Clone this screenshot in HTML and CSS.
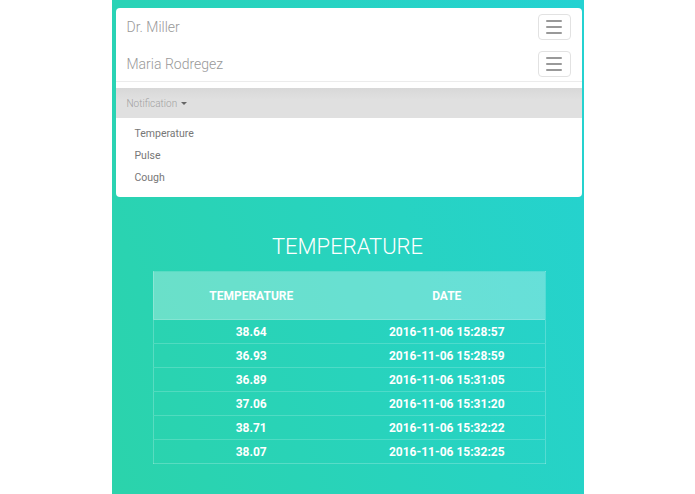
FILE: index.html
```html
<!DOCTYPE html>
<html>
<head>
<meta charset="utf-8">
<link rel="stylesheet" href="styles.css">
</head>
<body>
<div class="page">
  <div class="panel">
    <div class="nav-row">
      <span class="name">Dr. Miller</span>
      <button class="toggle"><span></span><span></span><span></span></button>
    </div>
    <div class="nav-row">
      <span class="name">Maria Rodregez</span>
      <button class="toggle"><span></span><span></span><span></span></button>
    </div>
    <div class="divider"></div>
    <div class="notif-bar">Notification <span class="caret"></span></div>
    <ul class="menu">
      <li>Temperature</li>
      <li>Pulse</li>
      <li>Cough</li>
    </ul>
  </div>
  <h1 class="title">TEMPERATURE</h1>
  <table class="data">
    <thead>
      <tr><th>TEMPERATURE</th><th>DATE</th></tr>
    </thead>
    <tbody>
      <tr><td>38.64</td><td>2016-11-06 15:28:57</td></tr>
      <tr><td>36.93</td><td>2016-11-06 15:28:59</td></tr>
      <tr><td>36.89</td><td>2016-11-06 15:31:05</td></tr>
      <tr><td>37.06</td><td>2016-11-06 15:31:20</td></tr>
      <tr><td>38.71</td><td>2016-11-06 15:32:22</td></tr>
      <tr><td>38.07</td><td>2016-11-06 15:32:25</td></tr>
    </tbody>
  </table>
</div>
</body>
</html>
```
FILE: styles.css
```css
html, body {
  margin: 0;
  padding: 0;
  background: #fff;
  font-family: Roboto, "Liberation Sans", sans-serif;
}
.page {
  width: 472px;
  height: 494px;
  margin: 0 auto;
  padding-top: 8px;
  box-sizing: border-box;
  background: linear-gradient(70deg, #2bd3ab 0%, #27d3c2 60%, #24d2d2 100%);
  overflow: hidden;
}
.panel {
  background: #fff;
  margin: 0 2px 0 4px;
  border-radius: 4px;
  overflow: hidden;
}
.nav-row {
  height: 37px;
  display: flex;
  align-items: center;
  justify-content: space-between;
  padding: 0 11px 0 11px;
}
.name {
  font-size: 14px;
  font-weight: 300;
  color: #999;
}
.toggle {
  width: 33px;
  height: 26px;
  border: 1px solid #e2e2e2;
  border-radius: 4px;
  background: #fff;
  padding: 0;
  display: flex;
  flex-direction: column;
  align-items: center;
  justify-content: center;
  gap: 4px;
}
.toggle span {
  display: block;
  width: 16px;
  height: 2px;
  background: #999;
  border-radius: 1px;
}
.divider {
  height: 1px;
  background: #ececec;
  margin-top: -1px;
  margin-bottom: 6px;
}
.notif-bar {
  height: 30px;
  display: flex;
  align-items: center;
  padding-left: 11px;
  font-size: 10px;
  font-weight: 300;
  color: #a0a0a0;
  background: linear-gradient(#d8d8d8, #e0e0e0 40%, #e0e0e0);
}
.caret {
  display: inline-block;
  margin-left: 4px;
  width: 0;
  height: 0;
  border-left: 3px solid transparent;
  border-right: 3px solid transparent;
  border-top: 3px solid #666;
}
.menu {
  list-style: none;
  margin: 0;
  padding: 5px 0 8px 19px;
}
.menu li {
  height: 22px;
  line-height: 22px;
  font-size: 10.5px;
  color: #777;
}
.title {
  margin: 34px 0 0 0;
  height: 32px;
  line-height: 32px;
  text-align: center;
  font-size: 22px;
  font-weight: 300;
  color: #fff;
}
.data {
  margin: 8px 0 0 41px;
  width: 393px;
  border-collapse: collapse;
  border: 1px solid rgba(255,255,255,0.22);
  color: #fff;
  table-layout: fixed;
}
.data th {
  height: 47px;
  padding: 0;
  font-size: 12px;
  font-weight: 700;
  background: rgba(255,255,255,0.3);
  text-align: center;
}
.data td {
  height: 23px;
  padding: 0;
  font-size: 12px;
  font-weight: 700;
  text-align: center;
  border-top: 1px solid rgba(255,255,255,0.18);
}
```
